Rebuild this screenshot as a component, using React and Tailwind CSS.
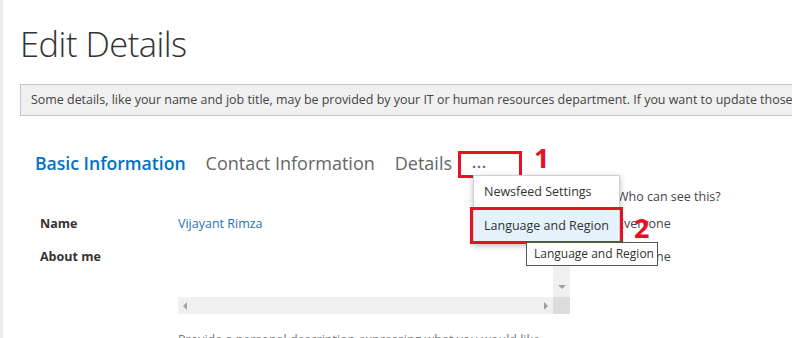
const font = { fontFamily: '"Open Sans", "Noto Sans", sans-serif' };

const Row = ({ label, children, visibility }) => (
  <div className="flex items-start text-[12.5px] leading-[18px]">
    <div className="w-[158px] shrink-0 pl-[20px] font-bold text-[#333]">{label}</div>
    <div className="w-[392px] shrink-0">{children}</div>
    <div className="pl-[47px] text-[#444] whitespace-nowrap">{visibility}</div>
  </div>
);

export default function App() {
  return (
    <div
      className="relative h-[338px] w-[792px] overflow-hidden bg-white border-l-[3px] border-[#ebebeb]"
      style={font}
    >
      <div className="pl-[17px]">
        <h1 className="pt-[20px] text-[34.5px] font-light leading-[48px] text-[#333] tracking-[-0.5px]">
          Edit Details
        </h1>

        <div className="mt-[16px] h-[32px] w-[1000px] flex items-center border border-[#c6c6c6] bg-[#f0f0f0] px-[10px] text-[12.45px] text-[#444] whitespace-nowrap">
          Some details, like your name and job title, may be provided by your IT or human resources department. If you want to update those details, contact your administrator.
        </div>

        {/* tabs */}
        <div className="mt-[30px] flex items-center pl-[15px] h-[34px]">
          <span className="text-[17.6px] font-semibold text-[#0072c6]">Basic Information</span>
          <span className="ml-[20px] text-[18px] text-[#666]">Contact Information</span>
          <span className="ml-[20px] text-[18px] text-[#666]">Details</span>
          <span className="relative ml-[20px] inline-block text-[14px] font-bold leading-[20px] text-[#666] tracking-[1px]">
            ...
            <span className="absolute -left-[14px] -top-[2px] h-[27px] w-[64px] border-[3px] border-[#e81123]" />
          </span>
        </div>

        {/* form */}
        <div className="mt-[8px] flex flex-col">
          <Row label="" visibility="Who can see this?">
            <div className="h-[18px]" />
          </Row>
          <div className="mt-[9px]">
            <Row label="Name" visibility="Everyone">
              <span className="text-[#1f6fb8]">Vijayant Rimza</span>
            </Row>
          </div>
          <div className="mt-[15px]">
            <Row label="About me" visibility="Everyone">
              <div className="h-[18px]" />
            </Row>
          </div>
          <div className="flex">
            <div className="w-[158px] shrink-0" />
            <div className="w-[392px] shrink-0">
              <div className="relative h-[31px]">
                <div className="absolute right-0 -top-[20px] bottom-0 w-[17px] bg-[#f0f0f0] flex items-end justify-center pb-[8px]">
                  <div className="h-0 w-0 border-l-[4px] border-r-[4px] border-t-[4px] border-l-transparent border-r-transparent border-t-[#a0a0a0]" />
                </div>
              </div>
              <div className="flex h-[17px]">
                <div className="flex flex-1 items-center justify-between bg-[#f0f0f0] px-[5px]">
                  <div className="h-0 w-0 border-t-[4px] border-b-[4px] border-r-[4px] border-t-transparent border-b-transparent border-r-[#a0a0a0]" />
                  <div className="h-0 w-0 border-t-[4px] border-b-[4px] border-l-[4px] border-t-transparent border-b-transparent border-l-[#a0a0a0]" />
                </div>
                <div className="w-[17px] bg-[#dcdcdc]" />
              </div>
              <p className="mt-[17px] text-[12.5px] text-[#777] leading-[18px]">
                Provide a personal description expressing what you would like others to know about you.
              </p>
            </div>
          </div>
        </div>
      </div>

      {/* overlays: red callout numbers, menu, tooltip */}
      <div className="absolute left-[531px] top-[142px] text-[27px] font-bold leading-[32px] text-[#e81123]">1</div>

      <div className="absolute left-[470px] top-[175px] w-[147px] border border-[#d0d0d0] bg-white shadow-[0_2px_6px_rgba(0,0,0,0.25)] text-[12.5px] text-[#333] whitespace-nowrap">
        <div className="h-[33px] flex items-center px-[10px]">Newsfeed Settings</div>
        <div className="relative h-[34px] flex items-center px-[10px] bg-[#e5f1fb]">
          Language and Region
          <div className="absolute -left-[4px] -right-[4px] -top-[2px] -bottom-[1px] border-[3px] border-[#e81123]" />
        </div>
      </div>
      <div className="absolute left-[631px] top-[212px] text-[27px] font-bold leading-[32px] text-[#e81123]">2</div>

      <div className="absolute left-[523px] top-[242px] h-[24px] w-[132px] flex items-center border border-[#555] bg-white px-[7px] text-[12px] text-[#333] whitespace-nowrap">
        Language and Region
      </div>
    </div>
  );
}
